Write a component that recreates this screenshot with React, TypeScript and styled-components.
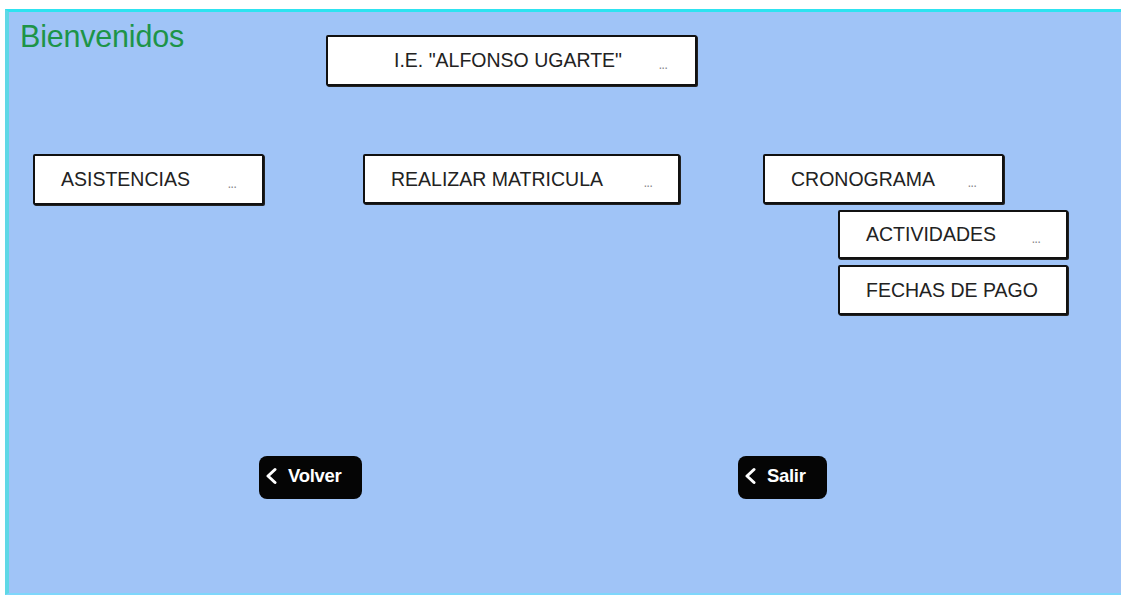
import React from "react";
import styled, { createGlobalStyle } from "styled-components";

const Global = createGlobalStyle`
  html, body { margin: 0; padding: 0; background: #ffffff; }
  body { font-family: "Liberation Sans", Arial, sans-serif; }
`;

const Page = styled.div`
  width: 1121px;
  height: 595px;
  box-sizing: border-box;
  padding: 9px 0 0 5px;
  background: #ffffff;
  overflow: hidden;
`;

const Frame = styled.div`
  box-sizing: border-box;
  height: 586px;
  background: #a0c4f7;
  border-top: 3px solid #2ee3f0;
  border-left: 4px solid #5fd8e6;
  border-bottom: 2px solid #7fd6fb;
  display: flex;
  flex-direction: column;
`;

const TopRow = styled.div`
  display: flex;
  align-items: flex-start;
`;

const Title = styled.h1`
  flex: 0 0 317px;
  box-sizing: border-box;
  margin: 6px 0 0 0;
  padding-left: 11px;
  font-family: "Liberation Sans", Arial, sans-serif;
  font-weight: 400;
  font-size: 30.5px;
  line-height: 36px;
  color: #1d9448;
  letter-spacing: -0.2px;
`;

const Box = styled.div<{ $w: number; $h: number }>`
  box-sizing: border-box;
  width: ${(p) => p.$w}px;
  height: ${(p) => p.$h}px;
  background: #ffffff;
  border: 2.5px solid #111111;
  border-radius: 2px;
  box-shadow: 1px 1px 0 #222;
  display: flex;
  align-items: center;
  position: relative;
`;

const Label = styled.span<{ $pl: number }>`
  padding-left: ${(p) => p.$pl}px;
  font-family: "Liberation Sans", Arial, sans-serif;
  font-size: 19.5px;
  color: #222222;
  white-space: nowrap;
`;

const Dots = styled.span<{ $r: number }>`
  position: absolute;
  right: ${(p) => p.$r}px;
  top: 50%;
  transform: translateY(-25%);
  font-family: "DejaVu Sans", sans-serif;
  font-size: 12px;
  color: #8a8a8a;
  letter-spacing: -1px;
`;

const HeaderBoxWrap = styled.div`
  margin-top: 23px;
`;

const MenuRow = styled.div`
  display: flex;
  align-items: flex-start;
  margin-top: 68px;
  padding-left: 24px;
`;

const Column = styled.div<{ $ml: number }>`
  margin-left: ${(p) => p.$ml}px;
  display: flex;
  flex-direction: column;
`;

const SubList = styled.div`
  margin: 6px 0 0 75px;
  display: flex;
  flex-direction: column;
  gap: 6px;
`;

const ButtonRow = styled.div`
  display: flex;
  margin-top: 141px;
  padding-left: 250px;
`;

const DarkButton = styled.button<{ $w: number; $ml: number }>`
  margin-left: ${(p) => p.$ml}px;
  width: ${(p) => p.$w}px;
  height: 43px;
  background: #050505;
  border: none;
  border-radius: 8px;
  color: #ffffff;
  display: flex;
  align-items: center;
  padding: 0 0 3px 6px;
  gap: 11px;
  font-family: "Liberation Sans", Arial, sans-serif;
  font-weight: 700;
  font-size: 18.5px;
  letter-spacing: -0.3px;
  cursor: pointer;
`;

const Chevron = () => (
  <svg width="12" height="18" viewBox="0 0 12 18">
    <path d="M10 2.5 L3 9 L10 15.5" fill="none" stroke="#fff" strokeWidth="3" strokeLinecap="round" strokeLinejoin="round" />
  </svg>
);

export default function App() {
  return (
    <>
      <Global />
      <Page>
        <Frame>
          <TopRow>
            <Title>Bienvenidos</Title>
            <HeaderBoxWrap>
              <Box $w={371} $h={51}>
                <Label $pl={66}>I.E. "ALFONSO UGARTE"</Label>
                <Dots $r={28}>...</Dots>
              </Box>
            </HeaderBoxWrap>
          </TopRow>
          <MenuRow>
            <Column $ml={0}>
              <Box $w={231} $h={51}>
                <Label $pl={26}>ASISTENCIAS</Label>
                <Dots $r={26}>...</Dots>
              </Box>
            </Column>
            <Column $ml={99}>
              <Box $w={317} $h={50}>
                <Label $pl={26}>REALIZAR MATRICULA</Label>
                <Dots $r={26}>...</Dots>
              </Box>
            </Column>
            <Column $ml={83}>
              <Box $w={241} $h={50}>
                <Label $pl={26}>CRONOGRAMA</Label>
                <Dots $r={26}>...</Dots>
              </Box>
              <SubList>
                <Box $w={230} $h={49}>
                  <Label $pl={26}>ACTIVIDADES</Label>
                  <Dots $r={26}>...</Dots>
                </Box>
                <Box $w={230} $h={50}>
                  <Label $pl={26}>FECHAS DE PAGO</Label>
                </Box>
              </SubList>
            </Column>
          </MenuRow>
          <ButtonRow>
            <DarkButton $w={103} $ml={0}>
              <Chevron />
              Volver
            </DarkButton>
            <DarkButton $w={89} $ml={376}>
              <Chevron />
              Salir
            </DarkButton>
          </ButtonRow>
        </Frame>
      </Page>
    </>
  );
}
